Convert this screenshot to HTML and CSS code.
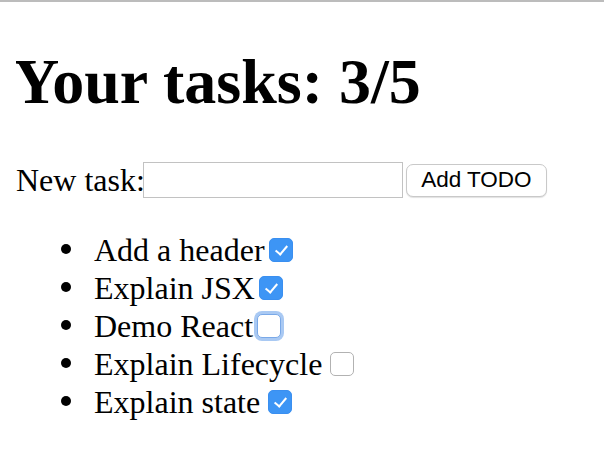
FILE: index.html
```html
<!DOCTYPE html>
<html>
<head>
<meta charset="utf-8">
<link rel="stylesheet" href="styles.css">
</head>
<body>
<div class="app">
  <h1 class="title">Your tasks: 3/5</h1>
  <form class="new-task"><label class="new-label" for="task">New task:</label><input class="task-input" id="task" type="text"><button class="add-btn" type="button">Add TODO</button></form>
  <ul class="tasks">
    <li class="task">Add a header<input class="check" type="checkbox" checked></li>
    <li class="task">Explain JSX<input class="check" type="checkbox" checked></li>
    <li class="task">Demo React<input class="check focus" type="checkbox"></li>
    <li class="task">Explain Lifecycle <input class="check spaced" type="checkbox"></li>
    <li class="task">Explain state <input class="check spaced" type="checkbox" checked></li>
  </ul>
</div>
</body>
</html>
```
FILE: styles.css
```css
html {
  border-top: 2px solid #bcbcbc;
  background: #fff;
}
body {
  margin: 16px;
  font-family: "Liberation Serif", "Times New Roman", serif;
  font-size: 32px;
  color: #000;
}
.title {
  font-size: 64px;
  font-weight: bold;
  margin: 27px 0 43px -3px;
  line-height: 73px;
}
.new-task {
  display: flex;
  align-items: center;
  height: 38px;
  margin: 0;
}
.new-label {
  line-height: 38px;
}
.task-input {
  box-sizing: border-box;
  width: 260px;
  height: 36px;
  margin: 0 0 0 -2px;
  border: 1px solid #c2c2c2;
  padding: 2px 4px;
  font-size: 26px;
  background: #fff;
  outline: none;
}
.add-btn {
  box-sizing: border-box;
  width: 141px;
  height: 33px;
  margin: 0 0 0 3px;
  padding: 0 14px;
  border: 1px solid #c9c9c9;
  border-radius: 7px;
  background: #fff;
  font-family: "Liberation Sans", Arial, sans-serif;
  font-size: 22.5px;
  color: #000;
  box-shadow: 0 1px 1px rgba(0,0,0,0.12);
}
.tasks {
  margin: 32px 0;
  padding-left: 80px;
  list-style: none;
}
.task {
  line-height: 38px;
  margin-left: -2px;
}
.task::before {
  content: "";
  display: inline-block;
  width: 10px;
  height: 10px;
  border-radius: 50%;
  background: #000;
  margin-left: -33px;
  margin-right: 23px;
  vertical-align: 7px;
}
.check {
  appearance: none;
  -webkit-appearance: none;
  position: relative;
  box-sizing: border-box;
  width: 24px;
  height: 24px;
  margin: 0 0 0 4px;
  vertical-align: -1px;
  border: 1px solid #b2b2b2;
  border-radius: 5px;
  background: #fff;
}
.check.spaced {
  margin-left: 0;
}
.check:checked {
  background: #3d95f5;
  border-color: #3a8ff0;
}
.check:checked::after {
  content: "";
  position: absolute;
  left: 8px;
  top: 4px;
  width: 5px;
  height: 10px;
  border: solid #fff;
  border-width: 0 2.5px 2.5px 0;
  transform: rotate(40deg);
}
.check.focus {
  border-color: #7aa9e8;
  box-shadow: 0 0 0 3px #a9c9f3;
}
```
